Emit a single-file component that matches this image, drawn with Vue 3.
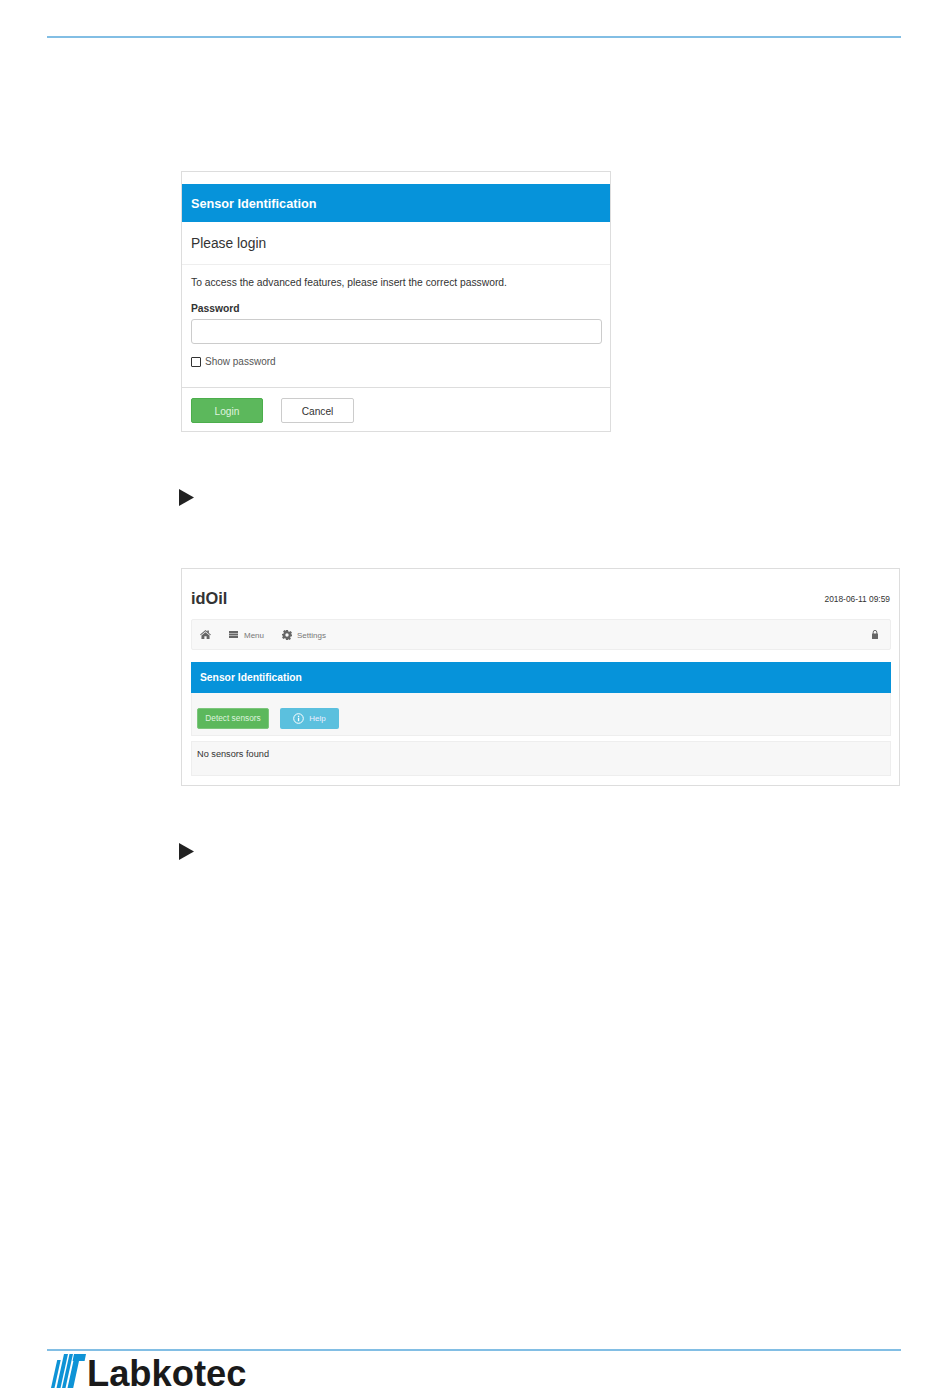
<template>
  <div class="page">
    <div class="rule"></div>

    <section class="panel login">
      <div class="login-title">Sensor Identification</div>
      <div class="login-head">Please login</div>
      <div class="login-body">
        <p class="intro">To access the advanced features, please insert the correct password.</p>
        <label class="field-label">Password</label>
        <div class="input"></div>
        <div class="check-row">
          <span class="check"></span>
          <span>Show password</span>
        </div>
      </div>
      <div class="login-foot">
        <span class="btn btn--login">Login</span>
        <span class="btn btn--cancel">Cancel</span>
      </div>
    </section>

    <svg class="arrow" width="15" height="17" viewBox="0 0 15 17"><polygon points="0,0 15,8.5 0,17" fill="#222" /></svg>

    <section class="panel app">
      <div class="app-top">
        <div class="brand">idOil</div>
        <div class="stamp">2018-06-11 09:59</div>
      </div>
      <nav class="nav">
        <svg class="nav-home" width="11" height="9" viewBox="0 0 24 20">
          <path d="M12 0 L16 3.4 V1 H19.5 V6.4 L24 10.2 L22.6 11.8 L12 3 L1.4 11.8 L0 10.2 Z M12 5 L21 12.4 V20 H14.5 V14 H9.5 V20 H3 V12.4 Z" fill="#666" />
        </svg>
        <svg class="nav-bars" width="9" height="7" viewBox="0 0 9 7">
          <rect width="9" height="2" fill="#666" />
          <rect y="2.5" width="9" height="2" fill="#666" />
          <rect y="5" width="9" height="2" fill="#666" />
        </svg>
        <span class="nav-text">Menu</span>
        <svg class="nav-gear" width="10" height="10" viewBox="0 0 20 20">
          <path d="M8 0 H12 L12.6 2.8 L14.8 3.7 L17.1 2.1 L17.9 2.9 L19.9 5 L18.3 7.3 L19.2 9 L20 9.5 V12.5 L17.2 13 L16.3 15.2 L17.9 17.5 L15.1 20 L12.8 18.4 L12 18.7 V20 H8 L7.4 17.2 L5.2 16.3 L2.9 17.9 L0.1 15.1 L1.7 12.8 L0.8 10.6 L0 10 V8 L2.8 7.4 L3.7 5.2 L2.1 2.9 L4.9 0.1 L7.2 1.7 L7.6 1.5 Z M10 6.6 A3.4 3.4 0 1 0 10 13.4 A3.4 3.4 0 1 0 10 6.6 Z" fill="#666" fill-rule="evenodd" />
        </svg>
        <span class="nav-text">Settings</span>
        <svg class="nav-lock" width="6" height="9" viewBox="0 0 6 9">
          <path d="M1.2 4 V2.2 A1.8 1.8 0 0 1 4.8 2.2 V4" fill="none" stroke="#666" stroke-width="1" />
          <rect y="3.6" width="6" height="5.4" rx=".5" fill="#666" />
        </svg>
      </nav>
      <div class="app-title">Sensor Identification</div>
      <div class="well tools">
        <span class="btn btn--detect">Detect sensors</span>
        <span class="btn btn--help">
          <svg width="11" height="11" viewBox="0 0 22 22">
            <circle cx="11" cy="11" r="9.6" fill="none" stroke="#fff" stroke-width="2" />
            <rect x="9.8" y="9.4" width="2.6" height="7" fill="#fff" />
            <rect x="9.8" y="5.4" width="2.6" height="2.6" fill="#fff" />
          </svg>
          Help
        </span>
      </div>
      <div class="well result">No sensors found</div>
    </section>

    <svg class="arrow" width="15" height="17" viewBox="0 0 15 17"><polygon points="0,0 15,8.5 0,17" fill="#222" /></svg>

    <div class="spacer"></div>

    <footer class="footer">
      <div class="rule rule--foot"></div>
      <div class="logo">
        <svg width="35" height="34" viewBox="0 0 35 34">
          <g fill="#0e93d6">
            <polygon points="6.2,6 9.7,6 3.5,34 0,34" />
            <polygon points="13,0 17,0 9.5,34 5.5,34" />
            <polygon points="18.5,0 22,0 14.5,34 11,34" />
            <polygon points="23,0 35,0 33.6,7 28,7 22.2,34 16.5,34 22.4,7 21.6,7" />
          </g>
        </svg>
        <span class="logo-text">Labkotec</span>
      </div>
    </footer>
  </div>
</template>

<script setup>
</script>

<style>
html, body { margin: 0; background: #fff; overflow: hidden; }
</style>

<style scoped>
.page {
  height: 1388px; box-sizing: border-box; padding: 36px 49px 0 47px;
  display: flex; flex-direction: column; overflow: hidden;
  font-family: "Liberation Sans", Arial, sans-serif; color: #333;
}
.rule { height: 2px; background: #5aa9dc; flex: none; transform: scaleY(.75); }

.panel { flex: none; margin-left: 134px; border: 1px solid #ddd; box-sizing: border-box; background: #fff; }

.login { width: 430px; height: 261px; margin-top: 133px; padding-top: 12px; }
.login-title {
  height: 38px; line-height: 40px; padding-left: 9px;
  background: #0693da; color: #fff; font-size: 12.7px; font-weight: 700;
}
.login-head {
  height: 42px; line-height: 44px; padding-left: 9px; border-bottom: 1px solid #eee;
  font-size: 13.8px; color: #333;
}
.login-body { height: 123px; padding: 12px 8px 0 9px; box-sizing: border-box; border-bottom: 1px solid #ddd; font-size: 10.3px; }
.intro { margin: 0; line-height: 12px; }
.field-label { display: block; margin-top: 14px; line-height: 12px; font-weight: 700; }
.input { height: 25px; margin-top: 4px; box-sizing: border-box; border: 1px solid #ccc; border-radius: 3px; }
.check-row { display: flex; align-items: center; gap: 4px; margin-top: 12px; line-height: 12px; font-size: 10px; color: #555; }
.check { width: 10px; height: 10px; box-sizing: border-box; border: 1px solid #333; border-radius: 1px; }

.login-foot { display: flex; gap: 18px; padding: 10px 9px 0; }
.btn { display: inline-flex; align-items: center; justify-content: center; box-sizing: border-box; border-radius: 2px; }
.btn--login { width: 72px; height: 25px; padding-top: 1px; background: #5cb85c; color: #dff3df; font-size: 10.2px; border: 1px solid #4cae4c; }
.btn--cancel { width: 73px; height: 25px; padding-top: 1px; background: #fff; color: #333; font-size: 10.2px; border: 1px solid #ccc; }

.arrow { flex: none; margin: 57px 0 0 132px; display: block; }

.app { width: 719px; height: 218px; margin-top: 62px; padding: 0 8px 0 9px; }
.app-top { display: flex; justify-content: space-between; align-items: center; height: 50px; padding-top: 9px; box-sizing: border-box; }
.brand { font-size: 16.4px; font-weight: 700; color: #333; }
.stamp { font-size: 8.4px; color: #333; margin-right: 1px; }

.nav {
  display: flex; align-items: center; height: 31px; box-sizing: border-box; padding: 0 12px 0 8px;
  background: #f8f8f8; border: 1px solid #eee; border-radius: 2px; color: #777; font-size: 8px;
}
.nav-text { padding-top: 1px; }
.nav-home { margin-right: 18px; }
.nav-bars { margin-right: 6px; }
.nav-gear { margin-left: 18px; margin-right: 5px; }
.nav-lock { margin-left: auto; }

.app-title {
  height: 31px; line-height: 31px; margin-top: 12px; padding-left: 9px;
  background: #0693da; color: #fff; font-size: 10.3px; font-weight: 700;
}
.well { background: #f7f7f7; border: 1px solid #eee; box-sizing: border-box; }
.tools { display: flex; align-items: center; gap: 11px; height: 43px; padding: 9px 0 0 5px; border-top: 0; }
.btn--detect { width: 72px; height: 21px; padding-bottom: 1px; background: #5cb85c; color: #dff3df; font-size: 8.3px; border: 1px solid #7cc67c; }
.btn--help { width: 59px; height: 21px; gap: 5px; background: #5bc0de; color: #eef; font-size: 8px; }
.result { height: 35px; margin-top: 5px; padding: 3px 0 0 5px; font-size: 9.2px; line-height: 19px; color: #333; }

.spacer { flex: 1; }
.footer { flex: none; }
.rule--foot { margin-bottom: 3px; }
.logo { display: flex; align-items: flex-start; margin-left: 4px; height: 34px; }
.logo-text { font-size: 36.3px; line-height: 28px; font-weight: 700; color: #1a1a1a; margin-top: 6px; margin-left: 1px; }
</style>
